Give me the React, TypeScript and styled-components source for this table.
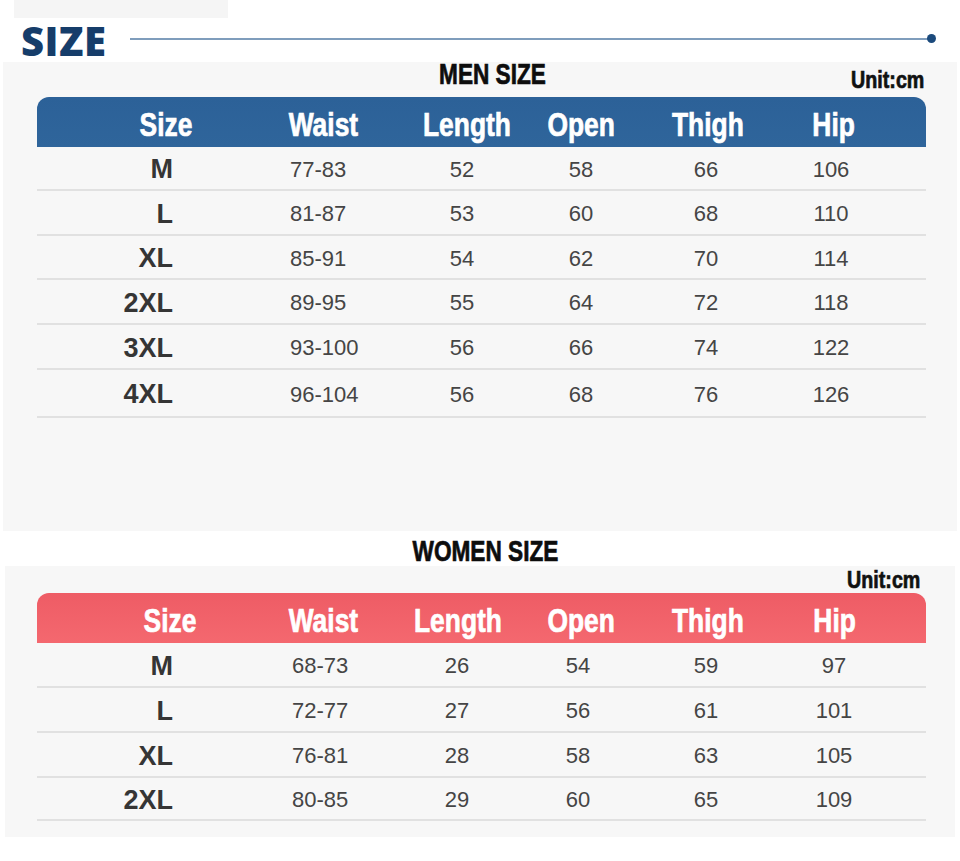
import React from "react";
import styled, { createGlobalStyle } from "styled-components";

const Global = createGlobalStyle`
  html, body { margin: 0; padding: 0; background: #ffffff; }
  body { font-family: "Liberation Sans", Arial, sans-serif; }
`;

const HEAVY = `"Liberation Sans", Arial, sans-serif`;

type Align = "left" | "center" | "right";
type ColSpec = { w: number; align: Align; pad: number };

const Page = styled.div`
  width: 960px;
  display: flex;
  flex-direction: column;
`;

const TopStrip = styled.div`
  width: 214px;
  height: 18px;
  margin-left: 14px;
  background: #f5f5f5;
`;

const TitleBar = styled.div`
  height: 44px;
  display: flex;
  align-items: center;
  padding-left: 21px;
  padding-right: 24px;
`;

const BigTitle = styled.div`
  font-family: "Open Sans", "Noto Sans", sans-serif;
  font-weight: 800;
  font-size: 40px;
  line-height: 40px;
  color: #163d6a;
  letter-spacing: 0.5px;
  margin-top: 2px;
`;

const Rule = styled.div`
  flex: 1;
  height: 2px;
  margin-left: 24px;
  background: #7f9dbc;
  margin-top: -3px;
`;

const Dot = styled.div`
  width: 9px;
  height: 9px;
  border-radius: 50%;
  background: #1b4a7c;
  margin-top: -3px;
  margin-left: -2px;
`;

const Panel = styled.div<{ $left: number; $inset: number; $right: number; $bottom: number; $width: number }>`
  width: ${(p) => p.$width}px;
  margin-left: ${(p) => p.$left}px;
  box-sizing: border-box;
  background: #f7f7f7;
  padding: 0 ${(p) => p.$right}px ${(p) => p.$bottom}px ${(p) => p.$inset}px;
`;

const HeadRow = styled.div<{ $h: number }>`
  height: ${(p) => p.$h}px;
  display: grid;
  grid-template-columns: 1fr auto 1fr;
  align-items: start;
`;

const Condensed = styled.span<{ $scale: number; $origin?: string }>`
  display: inline-block;
  font-family: ${HEAVY};
  font-weight: 700;
  -webkit-text-stroke: 0.7px currentColor;
  transform: scaleX(${(p) => p.$scale});
  transform-origin: ${(p) => p.$origin || "center"};
  white-space: nowrap;
`;

const SectionTitle = styled(Condensed)<{ $shift: number }>`
  grid-column: 2;
  font-size: 29px;
  line-height: 24px;
  color: #0d0d0d;
  margin-left: ${(p) => p.$shift * 2}px;
`;

const Unit = styled(Condensed)<{ $top: number; $right: number; $lh: number }>`
  grid-column: 3;
  justify-self: end;
  font-size: 24px;
  line-height: ${(p) => p.$lh}px;
  color: #111;
  margin-top: ${(p) => p.$top}px;
  margin-right: ${(p) => p.$right}px;
`;

const OuterTitle = styled.div`
  display: flex;
  justify-content: center;
  padding-left: 11px;
  margin-top: 8px;
  margin-bottom: 3px;
`;

const OuterTitleText = styled(Condensed)`
  font-size: 29px;
  line-height: 24px;
  color: #0d0d0d;
`;

const Table = styled.div`
  width: 889px;
  display: flex;
  flex-direction: column;
`;

const HeaderBar = styled.div<{ $tone: "blue" | "pink" }>`
  height: 50px;
  display: flex;
  border-radius: 12px 12px 0 0;
  background: ${(p) =>
    p.$tone === "blue"
      ? "linear-gradient(#2c6198, #2f659b)"
      : "linear-gradient(#ee5c65, #f4686f)"};
`;

const Row = styled.div<{ $h: number }>`
  height: ${(p) => p.$h}px;
  box-sizing: border-box;
  display: flex;
  border-bottom: 2px solid #e1e1e1;
`;

const Cell = styled.div<{ $w: number; $align: Align; $shift: number }>`
  width: ${(p) => p.$w}px;
  flex: none;
  box-sizing: border-box;
  display: flex;
  align-items: center;
  white-space: nowrap;
  justify-content: ${(p) =>
    p.$align === "left" ? "flex-start" : p.$align === "right" ? "flex-end" : "center"};
  padding-left: ${(p) =>
    p.$align === "left" ? p.$shift : p.$align === "center" && p.$shift > 0 ? p.$shift * 2 : 0}px;
  padding-right: ${(p) =>
    p.$align === "right" ? p.$shift : p.$align === "center" && p.$shift < 0 ? -p.$shift * 2 : 0}px;
`;

const HeadText = styled(Condensed)`
  font-size: 33px;
  line-height: 32px;
  color: #ffffff;
  padding-top: 5px;
`;

const SizeText = styled.span`
  font-family: "Liberation Sans", Arial, sans-serif;
  font-weight: 700;
  font-size: 27px;
  color: #353535;
  padding-top: 3px;
`;

const ValueText = styled.span`
  font-family: "Liberation Sans", Arial, sans-serif;
  font-size: 22px;
  color: #454545;
  padding-top: 3px;
`;

const WIDTHS = [210, 150, 130, 120, 125, 154];
const HEADS = ["Size", "Waist", "Length", "Open", "Thigh", "Hip"];

const menHead = [24, 1, 5, -6, -1.5, -15];
const womenHead = [28, 1, -4, -6, -1.5, -14];

const menData: ColSpec[] = [
  { w: 210, align: "right", pad: 74 },
  { w: 150, align: "left", pad: 43 },
  { w: 130, align: "center", pad: 0 },
  { w: 120, align: "center", pad: -6 },
  { w: 125, align: "center", pad: -3.5 },
  { w: 154, align: "center", pad: -18 },
];

const womenData: ColSpec[] = [
  { w: 210, align: "right", pad: 74 },
  { w: 150, align: "left", pad: 45 },
  { w: 130, align: "center", pad: -5 },
  { w: 120, align: "center", pad: -9 },
  { w: 125, align: "center", pad: -3.5 },
  { w: 154, align: "center", pad: -15 },
];

const menRows = [
  ["M", "77-83", "52", "58", "66", "106"],
  ["L", "81-87", "53", "60", "68", "110"],
  ["XL", "85-91", "54", "62", "70", "114"],
  ["2XL", "89-95", "55", "64", "72", "118"],
  ["3XL", "93-100", "56", "66", "74", "122"],
  ["4XL", "96-104", "56", "68", "76", "126"],
];
const menHeights = [44, 45, 44, 45, 45, 48];

const womenRows = [
  ["M", "68-73", "26", "54", "59", "97"],
  ["L", "72-77", "27", "56", "61", "101"],
  ["XL", "76-81", "28", "58", "63", "105"],
  ["2XL", "80-85", "29", "60", "65", "109"],
];
const womenHeights = [45, 45, 45, 43];

function SizeTable({
  tone,
  headShifts,
  cols,
  rows,
  heights,
}: {
  tone: "blue" | "pink";
  headShifts: number[];
  cols: ColSpec[];
  rows: string[][];
  heights: number[];
}) {
  return (
    <Table>
      <HeaderBar $tone={tone}>
        {HEADS.map((h, i) => (
          <Cell key={h} $w={WIDTHS[i]} $align="center" $shift={headShifts[i]}>
            <HeadText $scale={0.8}>{h}</HeadText>
          </Cell>
        ))}
      </HeaderBar>
      {rows.map((r, ri) => (
        <Row key={r[0]} $h={heights[ri]}>
          {r.map((v, ci) => (
            <Cell key={ci} $w={cols[ci].w} $align={cols[ci].align} $shift={cols[ci].pad}>
              {ci === 0 ? <SizeText>{v}</SizeText> : <ValueText>{v}</ValueText>}
            </Cell>
          ))}
        </Row>
      ))}
    </Table>
  );
}

export default function App() {
  return (
    <Page>
      <Global />
      <TopStrip />
      <TitleBar>
        <BigTitle>SIZE</BigTitle>
        <Rule />
        <Dot />
      </TitleBar>
      <Panel $left={3} $inset={34} $right={31} $bottom={113} $width={954}>
        <HeadRow $h={35}>
          <SectionTitle $scale={0.78} $shift={11}>MEN SIZE</SectionTitle>
          <Unit $scale={0.82} $origin="right" $top={6} $right={2} $lh={24}>Unit:cm</Unit>
        </HeadRow>
        <SizeTable tone="blue" headShifts={menHead} cols={menData} rows={menRows} heights={menHeights} />
      </Panel>
      <OuterTitle>
        <OuterTitleText $scale={0.78}>WOMEN SIZE</OuterTitleText>
      </OuterTitle>
      <Panel $left={5} $inset={32} $right={29} $bottom={16} $width={950}>
        <HeadRow $h={27}>
          <Unit $scale={0.82} $origin="right" $top={0} $right={6} $lh={27}>Unit:cm</Unit>
        </HeadRow>
        <SizeTable tone="pink" headShifts={womenHead} cols={womenData} rows={womenRows} heights={womenHeights} />
      </Panel>
    </Page>
  );
}
